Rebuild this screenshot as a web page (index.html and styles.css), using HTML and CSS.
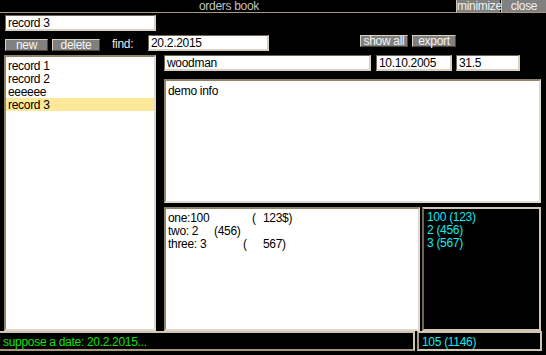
FILE: index.html
```html
<!DOCTYPE html>
<html>
<head>
<meta charset="utf-8">
<link rel="stylesheet" href="styles.css">
</head>
<body>
<div class="app">
  <div class="titlebar">
    <div class="title">orders book</div>
    <div class="winbtn minbtn">minimize</div>
    <div class="winbtn closebtn">close</div>
  </div>
  <div class="row1">
    <div class="field namefield">record 3</div>
  </div>
  <div class="row2">
    <div class="btn btn-new">new</div>
    <div class="btn btn-del">delete</div>
    <div class="findlabel">find:</div>
    <div class="field findfield">20.2.2015</div>
    <div class="btn btn-show">show all</div>
    <div class="btn btn-export">export</div>
  </div>
  <div class="main">
    <div class="list sunken">
      <div class="item">record 1</div>
      <div class="item">record 2</div>
      <div class="item">eeeeee</div>
      <div class="item selected">record 3</div>
    </div>
    <div class="right">
      <div class="inputs">
        <div class="field f-name">woodman</div>
        <div class="field f-date">10.10.2005</div>
        <div class="field f-num">31.5</div>
      </div>
      <div class="info sunken">demo info</div>
      <div class="lower">
        <div class="lines sunken">
          <div class="line"><span class="c1">one:100</span><span class="c2">(</span><span>123$)</span></div>
          <div class="line"><span class="c1 w2">two: 2</span><span>(456)</span></div>
          <div class="line"><span class="c1 w3">three: 3</span><span class="c2 w3b">(</span><span>567)</span></div>
        </div>
        <div class="sums">
          <div>100 (123)</div>
          <div>2 (456)</div>
          <div>3 (567)</div>
        </div>
      </div>
    </div>
  </div>
  <div class="status">
    <div class="st-left">suppose a date: 20.2.2015...</div>
    <div class="st-right">105 (1146)</div>
  </div>
</div>
</body>
</html>
```
FILE: styles.css
```css
* { box-sizing: border-box; }
html, body { margin: 0; padding: 0; background: #000; }
body {
  font-family: "Liberation Sans", Arial, sans-serif;
  font-size: 12px;
  letter-spacing: -0.3px;
  color: #000;
}
.app {
  width: 546px;
  height: 355px;
  display: flex;
  flex-direction: column;
  background: #000;
}
.titlebar {
  height: 13px;
  display: flex;
  border-bottom: 1px solid #a8987a;
}
.title {
  flex: 1;
  text-align: center;
  color: #c0c0c0;
  line-height: 13px;
  padding-left: 2px;
}
.winbtn {
  background: #808080;
  color: #f0f0f0;
  line-height: 13px;
  text-align: center;
  border-left: 1px solid #d0c8b0;
}
.minbtn { width: 44px; }
.closebtn { width: 45px; margin-left: 1px; }

.field {
  background: #fff;
  height: 16px;
  line-height: 13px;
  padding: 1px 0 0 2px;
  border-style: solid;
  border-width: 1px 2px 2px 1px;
  border-color: #6e6650 #d8d2c2 #d8d2c2 #6e6650;
  white-space: nowrap;
  overflow: hidden;
}
.sunken {
  background: #fff;
  border-style: solid;
  border-width: 2px;
  border-color: #8e8468 #e0dace #e0dace #8e8468;
}
.row1 {
  margin-top: 2px;
  padding-left: 5px;
  height: 16px;
  display: flex;
}
.namefield { width: 151px; }

.row2 {
  margin-top: 4px;
  height: 16px;
  display: flex;
  padding-left: 5px;
}
.btn {
  height: 12px;
  line-height: 11px;
  background: #808080;
  color: #f4f4f4;
  text-align: center;
  border-style: solid;
  border-width: 1px;
  border-color: #d8d0b8 #4a4436 #4a4436 #d8d0b8;
}
.btn-new { width: 43px; align-self: flex-end; }
.btn-del { width: 48px; margin-left: 4px; align-self: flex-end; }
.findlabel {
  color: #e8e8e8;
  margin-left: 12px;
  width: 36px;
  line-height: 19px;
}
.findfield { width: 121px; }
.btn-show { width: 48px; margin-left: 91px; }
.btn-export { width: 44px; margin-left: 4px; }

.main {
  margin-top: 4px;
  height: 276px;
  display: flex;
  padding-left: 4px;
}
.list {
  width: 152px;
  height: 276px;
  padding-top: 2px;
}
.item {
  height: 13px;
  line-height: 14px;
  padding-left: 2px;
}
.selected { background: #fbe898; }

.right {
  margin-left: 8px;
  width: 377px;
  display: flex;
  flex-direction: column;
}
.inputs { display: flex; height: 16px; }
.f-name { width: 207px; }
.f-date { width: 76px; margin-left: 5px; }
.f-num { width: 64px; margin-left: 4px; }
.info {
  margin-top: 8px;
  height: 124px;
  padding: 4px 0 0 2px;
  line-height: 13px;
}
.lower {
  margin-top: 4px;
  height: 124px;
  display: flex;
}
.lines {
  width: 256px;
  height: 124px;
  padding: 3px 0 0 2px;
}
.line {
  height: 13px;
  line-height: 13px;
  white-space: pre;
  display: flex;
}
.c1 { width: 84px; }
.w2 { width: 46px; }
.w3 { width: 75px; }
.c2 { width: 11px; }
.w3b { width: 20px; }
.sums {
  margin-left: 2px;
  width: 119px;
  height: 124px;
  background: #000;
  color: #10e8f0;
  padding: 2px 0 0 3px;
  line-height: 13px;
  border: 2px solid #d0c8b4;
  border-left-color: #6e6650;
}
.status {
  margin-top: 0px;
  height: 20px;
  display: flex;
}
.st-left {
  width: 415px;
  color: #10e010;
  border: 2px solid #a8987a;
  border-color: #cfc6b0 #cfc6b0 #a8987a #6e6650;
  border-left: none;
  padding: 1px 0 0 3px;
  line-height: 16px;
}
.st-right {
  margin-left: 2px;
  width: 125px;
  color: #10e8f0;
  border: 2px solid #cfc6b0;
  border-left-color: #a8987a;
  padding: 1px 0 0 3px;
  line-height: 16px;
}
```
